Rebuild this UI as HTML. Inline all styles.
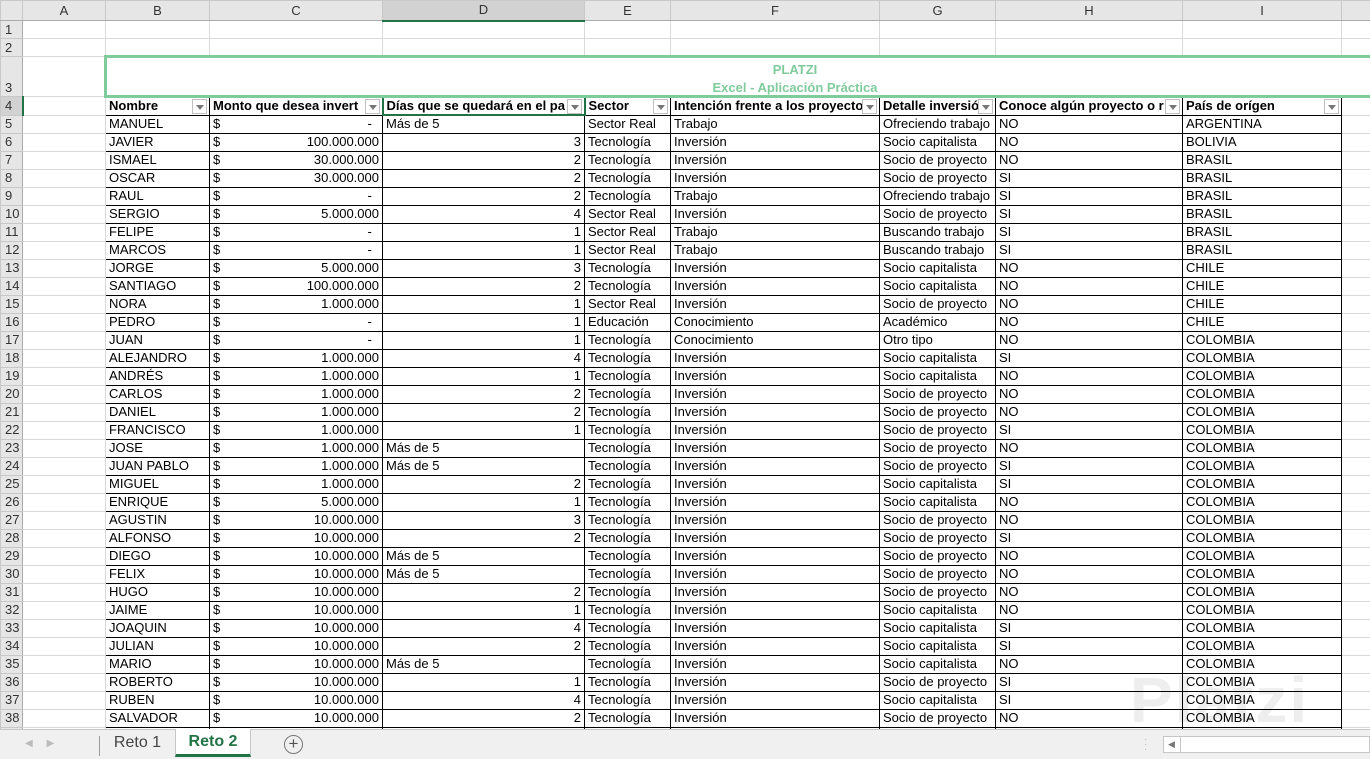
<!DOCTYPE html>
<html><head><meta charset="utf-8"><style>
*{margin:0;padding:0;box-sizing:border-box}
body{width:1370px;height:759px;overflow:hidden;background:#fff;font-family:"Liberation Sans",Arial,sans-serif;font-size:13px;color:#000;position:relative}
table{border-collapse:collapse;table-layout:fixed;position:absolute;left:0;top:0;width:1381px;z-index:1}
td{border:1px solid #d9d9d9;height:18px;padding:0 3px;white-space:nowrap;overflow:hidden;line-height:16px;position:relative}
tr.ch td{height:20px;background:#e6e6e6;text-align:center;color:#333;border-color:#c8c8c8;border-bottom:1px solid #ababab}
td.rh{background:#e6e6e6;color:#333;text-align:left;padding-left:4px;border-color:#c8c8c8;border-right:1px solid #ababab}
tr.t td.d{border:1px solid #000}
.r{text-align:right}
.dl{float:left}
.h td.d{font-weight:bold;border:1px solid #000}
.f{position:absolute;right:2px;top:1px;width:15px;height:15px;border:1px solid #c0c0c0;background:#fff}
.f:after{content:"";position:absolute;left:3px;top:5px;border-left:4px solid transparent;border-right:4px solid transparent;border-top:5px solid #777}
</style></head><body>
<div style="position:absolute;left:1130px;top:668px;font-size:64px;font-weight:bold;color:#eeeeee;letter-spacing:2px;line-height:64px;z-index:0">Platzi</div>
<table>
<colgroup><col style="width:22px"><col style="width:83px"><col style="width:104px"><col style="width:173px"><col style="width:202px"><col style="width:86px"><col style="width:209px"><col style="width:116px"><col style="width:187px"><col style="width:159px"><col style="width:40px"></colgroup>
<tr class="ch"><td></td><td>A</td><td>B</td><td>C</td><td style="background:#d2d2d2;border-bottom:2px solid #217346">D</td><td>E</td><td>F</td><td>G</td><td>H</td><td>I</td><td></td></tr>
<tr><td class="rh">1</td><td></td><td></td><td></td><td></td><td></td><td></td><td></td><td></td><td></td><td></td></tr>
<tr><td class="rh">2</td><td></td><td></td><td></td><td></td><td></td><td></td><td></td><td></td><td></td><td></td></tr>
<tr><td class="rh" style="height:40px;vertical-align:bottom">3</td><td></td><td colspan="9" style="border:3px solid #7fcb9b;border-right:none"></td></tr>
<tr class="h"><td class="rh" style="background:#d2d2d2;border-right:2px solid #217346">4</td><td></td>
<td class="d">Nombre<span class="f"></span></td><td class="d">Monto que desea invert<span class="f"></span></td><td class="d" style="border:2px solid #217346">Días que se quedará en el pa<span class="f"></span></td><td class="d">Sector<span class="f"></span></td><td class="d">Intención frente a los proyecto<span class="f"></span></td><td class="d">Detalle inversió<span class="f"></span></td><td class="d">Conoce algún proyecto o r<span class="f"></span></td><td class="d">País de orígen<span class="f"></span></td><td></td></tr>
<tr class="t"><td class="rh">5</td><td></td><td class="d">MANUEL</td><td class="d r"><span class="dl">$</span>- &nbsp;</td><td class="d">Más de 5</td><td class="d">Sector Real</td><td class="d">Trabajo</td><td class="d">Ofreciendo trabajo</td><td class="d">NO</td><td class="d">ARGENTINA</td><td></td></tr>
<tr class="t"><td class="rh">6</td><td></td><td class="d">JAVIER</td><td class="d r"><span class="dl">$</span>100.000.000</td><td class="d r">3</td><td class="d">Tecnología</td><td class="d">Inversión</td><td class="d">Socio capitalista</td><td class="d">NO</td><td class="d">BOLIVIA</td><td></td></tr>
<tr class="t"><td class="rh">7</td><td></td><td class="d">ISMAEL</td><td class="d r"><span class="dl">$</span>30.000.000</td><td class="d r">2</td><td class="d">Tecnología</td><td class="d">Inversión</td><td class="d">Socio de proyecto</td><td class="d">NO</td><td class="d">BRASIL</td><td></td></tr>
<tr class="t"><td class="rh">8</td><td></td><td class="d">OSCAR</td><td class="d r"><span class="dl">$</span>30.000.000</td><td class="d r">2</td><td class="d">Tecnología</td><td class="d">Inversión</td><td class="d">Socio de proyecto</td><td class="d">SI</td><td class="d">BRASIL</td><td></td></tr>
<tr class="t"><td class="rh">9</td><td></td><td class="d">RAUL</td><td class="d r"><span class="dl">$</span>- &nbsp;</td><td class="d r">2</td><td class="d">Tecnología</td><td class="d">Trabajo</td><td class="d">Ofreciendo trabajo</td><td class="d">SI</td><td class="d">BRASIL</td><td></td></tr>
<tr class="t"><td class="rh">10</td><td></td><td class="d">SERGIO</td><td class="d r"><span class="dl">$</span>5.000.000</td><td class="d r">4</td><td class="d">Sector Real</td><td class="d">Inversión</td><td class="d">Socio de proyecto</td><td class="d">SI</td><td class="d">BRASIL</td><td></td></tr>
<tr class="t"><td class="rh">11</td><td></td><td class="d">FELIPE</td><td class="d r"><span class="dl">$</span>- &nbsp;</td><td class="d r">1</td><td class="d">Sector Real</td><td class="d">Trabajo</td><td class="d">Buscando trabajo</td><td class="d">SI</td><td class="d">BRASIL</td><td></td></tr>
<tr class="t"><td class="rh">12</td><td></td><td class="d">MARCOS</td><td class="d r"><span class="dl">$</span>- &nbsp;</td><td class="d r">1</td><td class="d">Sector Real</td><td class="d">Trabajo</td><td class="d">Buscando trabajo</td><td class="d">SI</td><td class="d">BRASIL</td><td></td></tr>
<tr class="t"><td class="rh">13</td><td></td><td class="d">JORGE</td><td class="d r"><span class="dl">$</span>5.000.000</td><td class="d r">3</td><td class="d">Tecnología</td><td class="d">Inversión</td><td class="d">Socio capitalista</td><td class="d">NO</td><td class="d">CHILE</td><td></td></tr>
<tr class="t"><td class="rh">14</td><td></td><td class="d">SANTIAGO</td><td class="d r"><span class="dl">$</span>100.000.000</td><td class="d r">2</td><td class="d">Tecnología</td><td class="d">Inversión</td><td class="d">Socio capitalista</td><td class="d">NO</td><td class="d">CHILE</td><td></td></tr>
<tr class="t"><td class="rh">15</td><td></td><td class="d">NORA</td><td class="d r"><span class="dl">$</span>1.000.000</td><td class="d r">1</td><td class="d">Sector Real</td><td class="d">Inversión</td><td class="d">Socio de proyecto</td><td class="d">NO</td><td class="d">CHILE</td><td></td></tr>
<tr class="t"><td class="rh">16</td><td></td><td class="d">PEDRO</td><td class="d r"><span class="dl">$</span>- &nbsp;</td><td class="d r">1</td><td class="d">Educación</td><td class="d">Conocimiento</td><td class="d">Académico</td><td class="d">NO</td><td class="d">CHILE</td><td></td></tr>
<tr class="t"><td class="rh">17</td><td></td><td class="d">JUAN</td><td class="d r"><span class="dl">$</span>- &nbsp;</td><td class="d r">1</td><td class="d">Tecnología</td><td class="d">Conocimiento</td><td class="d">Otro tipo</td><td class="d">NO</td><td class="d">COLOMBIA</td><td></td></tr>
<tr class="t"><td class="rh">18</td><td></td><td class="d">ALEJANDRO</td><td class="d r"><span class="dl">$</span>1.000.000</td><td class="d r">4</td><td class="d">Tecnología</td><td class="d">Inversión</td><td class="d">Socio capitalista</td><td class="d">SI</td><td class="d">COLOMBIA</td><td></td></tr>
<tr class="t"><td class="rh">19</td><td></td><td class="d">ANDRÉS</td><td class="d r"><span class="dl">$</span>1.000.000</td><td class="d r">1</td><td class="d">Tecnología</td><td class="d">Inversión</td><td class="d">Socio capitalista</td><td class="d">NO</td><td class="d">COLOMBIA</td><td></td></tr>
<tr class="t"><td class="rh">20</td><td></td><td class="d">CARLOS</td><td class="d r"><span class="dl">$</span>1.000.000</td><td class="d r">2</td><td class="d">Tecnología</td><td class="d">Inversión</td><td class="d">Socio de proyecto</td><td class="d">NO</td><td class="d">COLOMBIA</td><td></td></tr>
<tr class="t"><td class="rh">21</td><td></td><td class="d">DANIEL</td><td class="d r"><span class="dl">$</span>1.000.000</td><td class="d r">2</td><td class="d">Tecnología</td><td class="d">Inversión</td><td class="d">Socio de proyecto</td><td class="d">NO</td><td class="d">COLOMBIA</td><td></td></tr>
<tr class="t"><td class="rh">22</td><td></td><td class="d">FRANCISCO</td><td class="d r"><span class="dl">$</span>1.000.000</td><td class="d r">1</td><td class="d">Tecnología</td><td class="d">Inversión</td><td class="d">Socio de proyecto</td><td class="d">SI</td><td class="d">COLOMBIA</td><td></td></tr>
<tr class="t"><td class="rh">23</td><td></td><td class="d">JOSE</td><td class="d r"><span class="dl">$</span>1.000.000</td><td class="d">Más de 5</td><td class="d">Tecnología</td><td class="d">Inversión</td><td class="d">Socio de proyecto</td><td class="d">NO</td><td class="d">COLOMBIA</td><td></td></tr>
<tr class="t"><td class="rh">24</td><td></td><td class="d">JUAN PABLO</td><td class="d r"><span class="dl">$</span>1.000.000</td><td class="d">Más de 5</td><td class="d">Tecnología</td><td class="d">Inversión</td><td class="d">Socio de proyecto</td><td class="d">SI</td><td class="d">COLOMBIA</td><td></td></tr>
<tr class="t"><td class="rh">25</td><td></td><td class="d">MIGUEL</td><td class="d r"><span class="dl">$</span>1.000.000</td><td class="d r">2</td><td class="d">Tecnología</td><td class="d">Inversión</td><td class="d">Socio capitalista</td><td class="d">SI</td><td class="d">COLOMBIA</td><td></td></tr>
<tr class="t"><td class="rh">26</td><td></td><td class="d">ENRIQUE</td><td class="d r"><span class="dl">$</span>5.000.000</td><td class="d r">1</td><td class="d">Tecnología</td><td class="d">Inversión</td><td class="d">Socio capitalista</td><td class="d">NO</td><td class="d">COLOMBIA</td><td></td></tr>
<tr class="t"><td class="rh">27</td><td></td><td class="d">AGUSTIN</td><td class="d r"><span class="dl">$</span>10.000.000</td><td class="d r">3</td><td class="d">Tecnología</td><td class="d">Inversión</td><td class="d">Socio de proyecto</td><td class="d">NO</td><td class="d">COLOMBIA</td><td></td></tr>
<tr class="t"><td class="rh">28</td><td></td><td class="d">ALFONSO</td><td class="d r"><span class="dl">$</span>10.000.000</td><td class="d r">2</td><td class="d">Tecnología</td><td class="d">Inversión</td><td class="d">Socio de proyecto</td><td class="d">SI</td><td class="d">COLOMBIA</td><td></td></tr>
<tr class="t"><td class="rh">29</td><td></td><td class="d">DIEGO</td><td class="d r"><span class="dl">$</span>10.000.000</td><td class="d">Más de 5</td><td class="d">Tecnología</td><td class="d">Inversión</td><td class="d">Socio de proyecto</td><td class="d">NO</td><td class="d">COLOMBIA</td><td></td></tr>
<tr class="t"><td class="rh">30</td><td></td><td class="d">FELIX</td><td class="d r"><span class="dl">$</span>10.000.000</td><td class="d">Más de 5</td><td class="d">Tecnología</td><td class="d">Inversión</td><td class="d">Socio de proyecto</td><td class="d">NO</td><td class="d">COLOMBIA</td><td></td></tr>
<tr class="t"><td class="rh">31</td><td></td><td class="d">HUGO</td><td class="d r"><span class="dl">$</span>10.000.000</td><td class="d r">2</td><td class="d">Tecnología</td><td class="d">Inversión</td><td class="d">Socio de proyecto</td><td class="d">NO</td><td class="d">COLOMBIA</td><td></td></tr>
<tr class="t"><td class="rh">32</td><td></td><td class="d">JAIME</td><td class="d r"><span class="dl">$</span>10.000.000</td><td class="d r">1</td><td class="d">Tecnología</td><td class="d">Inversión</td><td class="d">Socio capitalista</td><td class="d">NO</td><td class="d">COLOMBIA</td><td></td></tr>
<tr class="t"><td class="rh">33</td><td></td><td class="d">JOAQUIN</td><td class="d r"><span class="dl">$</span>10.000.000</td><td class="d r">4</td><td class="d">Tecnología</td><td class="d">Inversión</td><td class="d">Socio capitalista</td><td class="d">SI</td><td class="d">COLOMBIA</td><td></td></tr>
<tr class="t"><td class="rh">34</td><td></td><td class="d">JULIAN</td><td class="d r"><span class="dl">$</span>10.000.000</td><td class="d r">2</td><td class="d">Tecnología</td><td class="d">Inversión</td><td class="d">Socio capitalista</td><td class="d">SI</td><td class="d">COLOMBIA</td><td></td></tr>
<tr class="t"><td class="rh">35</td><td></td><td class="d">MARIO</td><td class="d r"><span class="dl">$</span>10.000.000</td><td class="d">Más de 5</td><td class="d">Tecnología</td><td class="d">Inversión</td><td class="d">Socio capitalista</td><td class="d">NO</td><td class="d">COLOMBIA</td><td></td></tr>
<tr class="t"><td class="rh">36</td><td></td><td class="d">ROBERTO</td><td class="d r"><span class="dl">$</span>10.000.000</td><td class="d r">1</td><td class="d">Tecnología</td><td class="d">Inversión</td><td class="d">Socio de proyecto</td><td class="d">SI</td><td class="d">COLOMBIA</td><td></td></tr>
<tr class="t"><td class="rh">37</td><td></td><td class="d">RUBEN</td><td class="d r"><span class="dl">$</span>10.000.000</td><td class="d r">4</td><td class="d">Tecnología</td><td class="d">Inversión</td><td class="d">Socio capitalista</td><td class="d">SI</td><td class="d">COLOMBIA</td><td></td></tr>
<tr class="t"><td class="rh">38</td><td></td><td class="d">SALVADOR</td><td class="d r"><span class="dl">$</span>10.000.000</td><td class="d r">2</td><td class="d">Tecnología</td><td class="d">Inversión</td><td class="d">Socio de proyecto</td><td class="d">NO</td><td class="d">COLOMBIA</td><td></td></tr>
<tr class="t"><td class="rh">39</td><td></td><td class="d"></td><td class="d"></td><td class="d"></td><td class="d"></td><td class="d"></td><td class="d"></td><td class="d"></td><td class="d"></td><td></td></tr>
</table>
<div style="position:absolute;left:600px;top:61px;width:390px;text-align:center;color:#7fcb9b;font-weight:bold;font-size:13px;line-height:18px;z-index:2">PLATZI<br>Excel - Aplicación Práctica</div>
<div style="position:absolute;left:0;top:729px;width:1370px;height:30px;background:#f0f0f0;border-top:1px solid #c6c6c6;z-index:3"></div>
<div style="position:absolute;z-index:4;left:25px;top:738px;color:#bbb;font-size:10px">◀ &nbsp;&nbsp;&nbsp; ▶</div>
<div style="position:absolute;z-index:4;left:99px;top:736px;width:1px;height:20px;background:#999"></div>
<div style="position:absolute;z-index:4;left:100px;top:730px;width:75px;height:26px;text-align:center;font-size:16px;line-height:26px;color:#444">Reto 1</div>
<div style="position:absolute;z-index:4;left:175px;top:729px;width:76px;height:28px;background:#fff;border-bottom:3px solid #217346;text-align:center;font-size:16px;font-weight:bold;line-height:26px;color:#217346;border-left:1px solid #c6c6c6;border-right:1px solid #c6c6c6">Reto 2</div>
<div style="position:absolute;z-index:4;left:284px;top:735px;width:19px;height:19px;border:1px solid #777;border-radius:50%;text-align:center;line-height:16px;font-size:17px;color:#555">+</div>
<div style="position:absolute;z-index:4;left:1144px;top:737px;color:#bbb;font-size:10px;line-height:5px">·<br>·<br>·</div>
<div style="position:absolute;z-index:4;left:1163px;top:736px;width:207px;height:17px;background:#fff;border:1px solid #c6c6c6"></div>
<div style="position:absolute;z-index:4;left:1163px;top:736px;width:18px;height:17px;border-right:1px solid #c6c6c6;color:#777;font-size:9px;text-align:center;line-height:17px">◀</div>
</body></html>
